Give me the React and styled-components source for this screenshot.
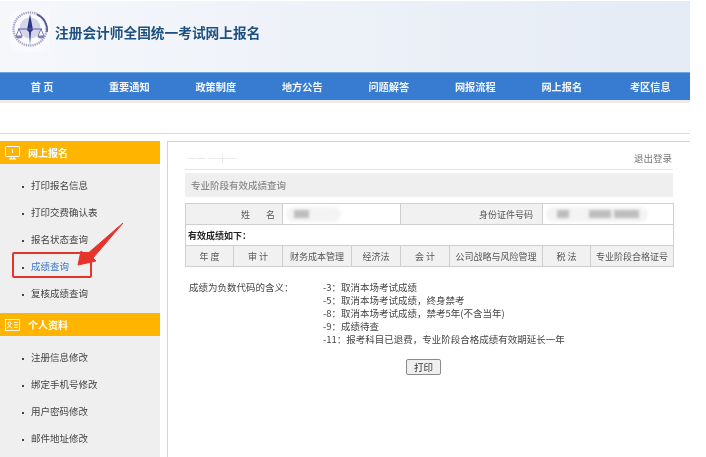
import React from "react";
import styled, { createGlobalStyle } from "styled-components";

const Global = createGlobalStyle`
  html, body { margin: 0; padding: 0; background: #fff; }
  body { width: 706px; height: 457px; overflow: hidden; font-family: "Noto Sans CJK SC", "Liberation Sans", sans-serif; }
  *, *::before, *::after { box-sizing: border-box; }
`;

const Page = styled.div`
  width: 690px;
  height: 457px;
  display: flex;
  flex-direction: column;
  overflow: hidden;
  filter: blur(0.3px);
`;

const Header = styled.header`
  height: 72px;
  padding-left: 10px;
  display: flex;
  align-items: flex-start;
  border-top: 1px solid #fff;
  background: linear-gradient(90deg, #f5f7fb 0%, #edf1f8 50%, #e4ebf5 100%);
`;

const LogoBox = styled.div`
  width: 40px;
  height: 42px;
  margin-top: 9px;
  flex: none;
  background: radial-gradient(circle, #fbfbfe 60%, #f5f7fb 100%);
`;

const SiteTitle = styled.h1`
  margin: 21px 0 0 5px;
  font-size: 13.7px;
  line-height: 20px;
  font-weight: 700;
  color: #1d5080;
  white-space: nowrap;
`;

const Nav = styled.nav`
  height: 28px;
  display: grid;
  grid-template-columns: 86px repeat(7, 86.5px);
  background: #377cd0;
  border-top: 1px solid #6fa6e0;
`;

const NavItem = styled.a`
  text-align: center;
  font-size: 10.2px;
  line-height: 27px;
  font-weight: 700;
  color: #f2f6fc;
  white-space: pre;

  &:first-child { padding-right: 2px; }
  &:last-child { padding-left: 4px; }
`;

const Strip = styled.div`
  height: 34px;
  background: #fff;
  border-top: 3px solid #ececec;
  border-bottom: 1px solid #d9d9d9;
`;

const Body = styled.div`
  flex: 1;
  margin-top: 7px;
  display: flex;
  min-height: 0;
`;

const Sidebar = styled.aside`
  position: relative;
  width: 160px;
  flex: none;
  background: #efefef;
`;

const SideHead = styled.div`
  height: 23px;
  display: flex;
  align-items: center;
  padding-left: 5px;
  gap: 8px;
  background: #ffb400;
  color: #fff;
  font-size: 10px;
  font-weight: 700;
`;

const SideList = styled.ul`
  list-style: none;
  margin: 0;
  padding: 8px 0 6px;
`;

const SideItem = styled.li`
  position: relative;
  height: 27px;
  padding-left: 31px;
  font-size: 9.5px;
  line-height: 27px;
  color: ${(p) => (p.$active ? "#3a78cc" : "#444")};
  white-space: nowrap;

  &::before {
    content: "";
    position: absolute;
    left: 22px;
    top: 14px;
    width: 2px;
    height: 2px;
    background: #444;
  }

  ${(p) =>
    p.$active &&
    `&::after {
      content: "";
      position: absolute;
      left: 12px;
      top: -1px;
      width: 80px;
      height: 26px;
      border: 2px solid #e8322c;
      border-radius: 2px;
    }`}
`;

const Arrow = styled.svg`
  position: absolute;
  left: 74px;
  top: 80px;
  width: 52px;
  height: 60px;
`;

const Main = styled.main`
  width: 523px;
  margin-left: 7px;
  padding: 0 17px 0 17px;
  border-top: 1px solid #d4d4d4;
  border-left: 1px solid #d4d4d4;
`;

const TopRow = styled.div`
  height: 28px;
  display: flex;
  align-items: center;
  justify-content: space-between;
  border-bottom: 1px solid #e2e2e2;
  padding: 4px 1px 0 2px;
`;

const Ghost = styled.span`
  font-size: 9.5px;
  color: #e4e4e4;
`;

const Logout = styled.a`
  font-size: 9.5px;
  color: #777;
`;

const PanelTitle = styled.div`
  height: 24px;
  margin-top: 3px;
  padding-left: 6px;
  background: #efefef;
  font-size: 9.5px;
  line-height: 24px;
  font-weight: 500;
  color: #8a8a8a;
`;

const Table = styled.table`
  width: 488px;
  margin-top: 6px;
  border-collapse: collapse;
  table-layout: fixed;
  font-size: 9px;
  color: #555;
`;

const Cell = styled.td`
  height: 21px;
  padding: 0 ${(p) => p.$right || 0}px 0 ${(p) => (p.$bold ? "2px" : "0")};
  border: 1px solid #cfcfcf;
  background: ${(p) => (p.$shade ? "#f1f1f1" : "#fff")};
  text-align: ${(p) => (p.$right ? "right" : p.$bold ? "left" : "center")};
  font-weight: ${(p) => (p.$bold ? 700 : 400)};
  color: ${(p) => (p.$bold ? "#222" : "#555")};
  line-height: 19px;
  white-space: pre;
`;

const Mask = styled.div`
  width: ${(p) => p.$w}px;
  height: 15px;
  margin-left: 3px;
  border-radius: 8px;
  background: #f4f4f4;
  filter: blur(1.5px);
  display: flex;
  align-items: center;
`;

const MaskBit = styled.i`
  display: block;
  width: ${(p) => p.$w}px;
  height: 8px;
  margin-left: ${(p) => p.$ml}px;
  background: #bdbdbd;
`;

const Notes = styled.div`
  display: flex;
  margin: 14px 0 0 4px;
  font-size: 9.5px;
  line-height: 13.1px;
  color: #444;
`;

const NotesLabel = styled.div`
  width: 134px;
  flex: none;
`;

const NotesList = styled.ul`
  list-style: none;
  margin: 0;
  padding: 0;
`;

const Note = styled.li`
  white-space: nowrap;
`;

const Actions = styled.div`
  display: flex;
  justify-content: center;
  margin-top: 13px;
  padding-right: 11px;
`;

const PrintButton = styled.button`
  width: 35px;
  height: 16px;
  padding: 0;
  border: 1px solid #8a8a8a;
  border-radius: 2px;
  background: #efefef;
  font: 400 9.5px/14px "Noto Sans CJK SC", "Liberation Sans", sans-serif;
  color: #333;
`;

const Logo = () => (
  <svg viewBox="0 0 40 42" width="40" height="42">
    <circle cx="20" cy="19" r="16.5" fill="none" stroke="#a9a6cc" strokeWidth="2.4" strokeDasharray="1.4 .8" />
    <path d="M27 4.5 A16.5 16.5 0 0 1 37 22" fill="none" stroke="#54589b" strokeWidth="1.6" />
    <circle cx="20" cy="18" r="10.5" fill="#d5d5ea" />
    <path d="M20 4 L23 20 L21 22 L20 35 L19 22 L17 20 Z" fill="#2c3585" />
    <path d="M8 19 H32" stroke="#5a5ea2" strokeWidth="1" />
    <path d="M9 19 L6 26 H12 Z M31 19 L28 26 H34 Z" fill="none" stroke="#5a5ea2" strokeWidth=".8" />
    <path d="M5.5 26 a3.5 2.4 0 0 0 7 0 Z M27.5 26 a3.5 2.4 0 0 0 7 0 Z" fill="#7d80b8" />
  </svg>
);

const MonitorIcon = () => (
  <svg viewBox="0 0 15 14" width="15" height="14" fill="none" stroke="#fff" strokeWidth="1">
    <rect x=".5" y=".5" width="14" height="10" rx="1" />
    <path d="M7.5 3 V7 M4 13 H11 M6 11 V13 M9 11 V13" />
  </svg>
);

const CardIcon = () => (
  <svg viewBox="0 0 15 12" width="15" height="12" fill="none" stroke="#fff" strokeWidth=".9">
    <rect x=".5" y=".5" width="14" height="11" />
    <circle cx="4.5" cy="4.5" r="1.6" />
    <path d="M2 9.5 C2.5 7 6.5 7 7 9.5 M9 3.5 H13 M9 6 H13 M9 8.5 H13" />
  </svg>
);

const navItems = ["首 页", "重要通知", "政策制度", "地方公告", "问题解答", "网报流程", "网上报名", "考区信息"];
const firstMenu = ["打印报名信息", "打印交费确认表", "报名状态查询", "成绩查询", "复核成绩查询"];
const secondMenu = ["注册信息修改", "绑定手机号修改", "用户密码修改", "邮件地址修改"];
const columns = [48, 49, 69, 49, 49, 93, 48, 83];
const subjects = ["年 度", "审 计", "财务成本管理", "经济法", "会 计", "公司战略与风险管理", "税 法", "专业阶段合格证号"];
const notes = [
  "-3：取消本场考试成绩",
  "-5：取消本场考试成绩，终身禁考",
  "-8：取消本场考试成绩，禁考5年(不含当年)",
  "-9：成绩待查",
  "-11：报考科目已退费，专业阶段合格成绩有效期延长一年",
];

export default function App() {
  return (
    <Page>
      <Global />
      <Header>
        <LogoBox><Logo /></LogoBox>
        <SiteTitle>注册会计师全国统一考试网上报名</SiteTitle>
      </Header>
      <Nav>
        {navItems.map((n) => <NavItem key={n}>{n}</NavItem>)}
      </Nav>
      <Strip />
      <Body>
        <Sidebar>
          <SideHead><MonitorIcon />网上报名</SideHead>
          <SideList>
            {firstMenu.map((m) => <SideItem key={m} $active={m === "成绩查询"}>{m}</SideItem>)}
          </SideList>
          <SideHead><CardIcon />个人资料</SideHead>
          <SideList>
            {secondMenu.map((m) => <SideItem key={m}>{m}</SideItem>)}
          </SideList>
          <Arrow viewBox="0 0 52 60">
            <path d="M49 2 L19 37 L22 40 L4 44 L7 30 L12 34 Z" fill="#e8322c" stroke="#e8322c" strokeWidth="1" strokeLinejoin="round" />
          </Arrow>
        </Sidebar>
        <Main>
          <TopRow>
            <Ghost>一一 一十一</Ghost>
            <Logout>退出登录</Logout>
          </TopRow>
          <PanelTitle>专业阶段有效成绩查询</PanelTitle>
          <Table>
            <colgroup>
              {columns.map((w, i) => <col key={i} style={{ width: w }} />)}
            </colgroup>
            <tbody>
              <tr>
                <Cell colSpan={2} $shade $right={7}>{"姓        名"}</Cell>
                <Cell colSpan={2}><Mask $w={55}><MaskBit $ml={8} $w={15} /></Mask></Cell>
                <Cell colSpan={2} $shade $right={9}>身份证件号码</Cell>
                <Cell colSpan={2}><Mask $w={102}><MaskBit $ml={11} $w={12} /><MaskBit $ml={20} $w={22} /><MaskBit $ml={3} $w={25} /></Mask></Cell>
              </tr>
              <tr>
                <Cell colSpan={8} $bold>有效成绩如下：</Cell>
              </tr>
              <tr>
                {subjects.map((s) => <Cell key={s} $shade>{s}</Cell>)}
              </tr>
            </tbody>
          </Table>
          <Notes>
            <NotesLabel>成绩为负数代码的含义：</NotesLabel>
            <NotesList>
              {notes.map((n) => <Note key={n}>{n}</Note>)}
            </NotesList>
          </Notes>
          <Actions>
            <PrintButton>打印</PrintButton>
          </Actions>
        </Main>
      </Body>
    </Page>
  );
}
